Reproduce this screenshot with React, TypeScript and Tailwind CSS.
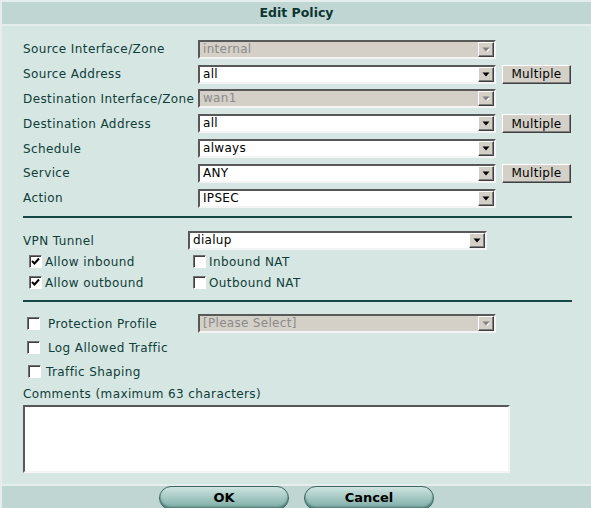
import React from 'react'

const font = { fontFamily: '"DejaVu Sans", Verdana, sans-serif' }

function Arrow({ disabled }: { disabled?: boolean }) {
  return (
    <div className="flex h-[15px] w-[16px] items-center justify-center border border-t-[#ffffff] border-l-[#ffffff] border-b-[#404040] border-r-[#404040] bg-[#d4d0c8] shadow-[inset_-1px_-1px_0_#808080]">
      <svg width="8" height="5" viewBox="0 0 8 5">
        {disabled && <path d="M1 1 L7 1 L4 4 Z" fill="#ffffff" transform="translate(1,1)" />}
        <path d="M0.5 0.5 L7.5 0.5 L4 4.5 Z" fill={disabled ? '#808080' : '#000000'} />
      </svg>
    </div>
  )
}

function Select({ value, disabled, width }: { value: string; disabled?: boolean; width: string }) {
  return (
    <div
      className={`flex h-[19px] ${width} items-center border-2 border-t-[#585858] border-l-[#585858] border-b-[#f4f4f4] border-r-[#f4f4f4] ${
        disabled ? 'bg-[#d4d0c8] text-[#8a8a8a]' : 'bg-white text-black'
      }`}
    >
      <span className="flex-1 pl-[3px] text-[12px] leading-[15px] tracking-[0.3px]">{value}</span>
      <Arrow disabled={disabled} />
    </div>
  )
}

function Multiple() {
  return (
    <button className="ml-[6px] flex h-[19px] w-[69px] items-center justify-center border border-t-white border-l-white border-b-[#404040] border-r-[#404040] bg-[#d4d0c8] text-[12px] tracking-[0.3px] text-black shadow-[inset_-1px_-1px_0_#808080]">
      Multiple
    </button>
  )
}

function Check({ checked }: { checked?: boolean }) {
  return (
    <div className="flex h-[13px] w-[13px] items-center justify-center border border-t-[#707070] border-l-[#707070] border-b-white border-r-white bg-white shadow-[inset_1px_1px_0_#404040]">
      {checked && (
        <svg width="9" height="9" viewBox="0 0 9 9">
          <path d="M1 4 L3.5 6.5 L8 1.5" stroke="#000" strokeWidth="2" fill="none" />
        </svg>
      )}
    </div>
  )
}

const rows: { label: string; value: string; disabled?: boolean; multiple?: boolean }[] = [
  { label: 'Source Interface/Zone', value: 'internal', disabled: true },
  { label: 'Source Address', value: 'all', multiple: true },
  { label: 'Destination Interface/Zone', value: 'wan1', disabled: true },
  { label: 'Destination Address', value: 'all', multiple: true },
  { label: 'Schedule', value: 'always' },
  { label: 'Service', value: 'ANY', multiple: true },
  { label: 'Action', value: 'IPSEC' },
]

function PillButton({ children, width }: { children: React.ReactNode; width: string }) {
  return (
    <button
      className={`h-[24px] ${width} rounded-full border border-[#3d6561] bg-gradient-to-b from-[#cfe4e0] via-[#a3c8c2] to-[#79a8a1] text-[13px] font-bold text-black shadow-[inset_0_-2px_2px_#4a7b74]`}
    >
      {children}
    </button>
  )
}

export default function App() {
  return (
    <div style={font} className="h-[508px] w-[591px] overflow-hidden bg-[#e6eeed] pl-[2px] pt-[2px] text-[#0f3d38]">
      {/* Header */}
      <div className="flex h-[22px] items-center justify-center bg-[#bfd6d3] text-[12.5px] font-bold text-[#0d3430]">
        Edit Policy
      </div>

      <div className="mt-[2px] h-[458px] bg-[#d6e6e3] pl-[21px] pt-[11px] text-[12px] tracking-[0.4px]">
        {/* Main rows */}
        <div className="flex flex-col">
          {rows.map((r) => (
            <div key={r.label} className="flex h-[24.8px] items-center">
              <div className="w-[175px]">{r.label}</div>
              <Select value={r.value} disabled={r.disabled} width="w-[298px]" />
              {r.multiple && <Multiple />}
            </div>
          ))}
        </div>

        <div className="mr-[19px] mt-[5px] h-[2px] bg-[#154843]" />

        {/* VPN */}
        <div className="mt-[13px] flex h-[20px] items-center">
          <div className="w-[165px]">VPN Tunnel</div>
          <Select value="dialup" width="w-[299px]" />
        </div>
        <div className="mt-[1px] flex h-[20px] items-center">
          <div className="flex w-[170px] items-center pl-[6px]">
            <Check checked />
            <span className="ml-[3px]">Allow inbound</span>
          </div>
          <Check />
          <span className="ml-[3px]">Inbound NAT</span>
        </div>
        <div className="mt-[1px] flex h-[20px] items-center">
          <div className="flex w-[170px] items-center pl-[6px]">
            <Check checked />
            <span className="ml-[3px]">Allow outbound</span>
          </div>
          <Check />
          <span className="ml-[3px]">Outbound NAT</span>
        </div>

        <div className="mr-[19px] mt-[7px] h-[2px] bg-[#154843]" />

        {/* Options */}
        <div className="mt-[12px] flex h-[20px] items-center">
          <div className="flex w-[175px] items-center pl-[4px]">
            <Check />
            <span className="ml-[8px]">Protection Profile</span>
          </div>
          <Select value="[Please Select]" disabled width="w-[298px]" />
        </div>
        <div className="mt-[4px] flex h-[20px] items-center pl-[4px]">
          <Check />
          <span className="ml-[8px]">Log Allowed Traffic</span>
        </div>
        <div className="mt-[4px] flex h-[20px] items-center pl-[5px]">
          <Check />
          <span className="ml-[5px]">Traffic Shaping</span>
        </div>
        <div className="mt-[2px] h-[20px] leading-[20px]">Comments (maximum 63 characters)</div>
        <textarea className="mt-[1px] block h-[68px] w-[487px] resize-none border-2 border-t-[#585858] border-l-[#585858] border-b-[#f4f4f4] border-r-[#f4f4f4] bg-white outline-none" />
      </div>

      {/* Footer */}
      <div className="mt-[2px] flex h-[24px] justify-center gap-[15px] bg-[#bfd6d3]">
        <PillButton width="w-[130px]">OK</PillButton>
        <PillButton width="w-[130px]">Cancel</PillButton>
      </div>
    </div>
  )
}
